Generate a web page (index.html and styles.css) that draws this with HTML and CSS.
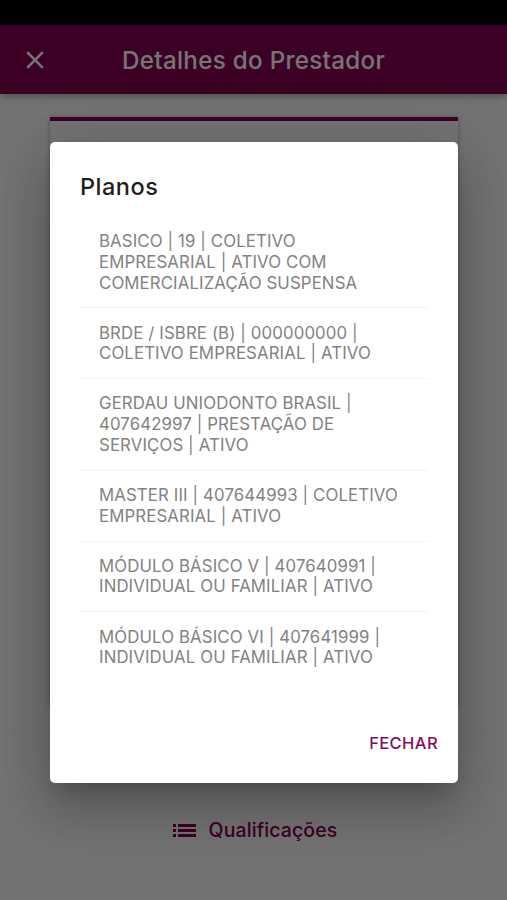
FILE: index.html
```html
<!DOCTYPE html>
<html lang="pt-BR">
<head>
    <meta charset="UTF-8">
    <meta name="viewport" content="width=device-width, initial-scale=1.0">
    <title>Detalhes do Prestador</title>
    <link rel="stylesheet" href="styles.css">
</head>
<body>
    <div class="status-bar"></div>

    <div class="page">
        <header class="header">
            <svg class="close-icon" viewBox="0 0 18 18"><path d="M1.2 1.2L16.8 16.8M16.8 1.2L1.2 16.8"/></svg>
            <h1>Detalhes do Prestador</h1>
        </header>

        <main class="content">
            <div class="card"></div>
        </main>

        <footer class="footer">
            <svg class="list-icon" viewBox="0 0 23 13"><path d="M0 0h3v3H0zM5 0h18v3H5zM0 5h3v3H0zM5 5h18v3H5zM0 10h3v3H0zM5 10h18v3H5z"/></svg>
            <span class="footer-label">Qualificações</span>
        </footer>

        <div class="overlay">
            <div class="modal">
                <h2>Planos</h2>
                <ul class="plans">
                    <li>BASICO | 19 | COLETIVO<br>EMPRESARIAL | ATIVO COM<br>COMERCIALIZAÇÃO SUSPENSA</li>
                    <li>BRDE / ISBRE (B) | 000000000 |<br>COLETIVO EMPRESARIAL | ATIVO</li>
                    <li>GERDAU UNIODONTO BRASIL |<br>407642997 | PRESTAÇÃO DE<br>SERVIÇOS | ATIVO</li>
                    <li>MASTER III | 407644993 | COLETIVO<br>EMPRESARIAL | ATIVO</li>
                    <li>MÓDULO BÁSICO V | 407640991 |<br>INDIVIDUAL OU FAMILIAR | ATIVO</li>
                    <li>MÓDULO BÁSICO VI | 407641999 |<br>INDIVIDUAL OU FAMILIAR | ATIVO</li>
                </ul>
                <button class="close-btn">FECHAR</button>
            </div>
        </div>
    </div>
</body>
</html>
```

FILE: styles.css
```css
* {
    box-sizing: border-box;
}
body {
    margin: 0;
    height: 900px;
    display: flex;
    flex-direction: column;
    overflow: hidden;
    font-family: Inter, "Liberation Sans", sans-serif;
}
.status-bar {
    height: 25px;
    background: #000;
}
.page {
    position: relative;
    flex: 1;
    display: flex;
    flex-direction: column;
    background: #fafafa;
}
.header {
    height: 69px;
    display: flex;
    align-items: center;
    padding: 0 26px;
    background: #840052;
    color: #fff;
    box-shadow: 0 2px 8px rgba(0,0,0,0.35);
}
.close-icon {
    width: 18px;
    height: 18px;
    fill: none;
    stroke: #fff;
    stroke-width: 2.5;
}
.header h1 {
    margin: 1px 0 0 78px;
    font-size: 24.2px;
    font-weight: 500;
    letter-spacing: 0.3px;
    white-space: nowrap;
}
.content {
    flex: 1;
    padding: 23px 49px 30px 50px;
}
.card {
    height: 100%;
    border-top: 4px solid #840052;
    box-shadow: 0 1px 5px rgba(0,0,0,0.3);
}
.footer {
    height: 165px;
    border-top: 1px solid #f3f3f3;
    display: flex;
    justify-content: center;
    padding: 82px 0 0 3px;
    color: #840052;
}
.list-icon {
    width: 23px;
    height: 13px;
    margin: 6px 13px 0 0;
    fill: #840052;
}
.footer-label {
    font-size: 19.5px;
    line-height: 24px;
    font-weight: 500;
    letter-spacing: 0.1px;
}
.overlay {
    position: absolute;
    inset: 0;
    display: flex;
    align-items: center;
    justify-content: center;
    padding-left: 1px;
    background: rgba(0,0,0,0.54);
}
.modal {
    width: 408px;
    height: 641px;
    padding: 30px 30px 20px;
    display: flex;
    flex-direction: column;
    background: #fff;
    border-radius: 5px;
    box-shadow: 0 14px 19px -9px rgba(0,0,0,0.2), 0 30px 48px 4px rgba(0,0,0,0.14), 0 11px 58px 10px rgba(0,0,0,0.12);
}
.modal h2 {
    margin: 0 0 15px;
    font-size: 23.5px;
    line-height: 30px;
    font-weight: 500;
    letter-spacing: 0.5px;
    color: #1e1e1e;
}
.plans {
    margin: 0;
    padding: 0;
    list-style: none;
}
.plans li {
    padding: 14.2px 0 14.2px 19px;
    border-bottom: 1px solid #f3f3f3;
    font-size: 16.8px;
    line-height: 20.7px;
    letter-spacing: 0.12px;
    color: #828282;
    white-space: nowrap;
}
.plans li:last-child {
    border-bottom: none;
}
.close-btn {
    margin: auto -10px 8px auto;
    padding: 0;
    border: none;
    background: none;
    font-family: inherit;
    font-size: 16.5px;
    line-height: 24px;
    font-weight: 500;
    letter-spacing: 0.4px;
    color: #840c60;
}
```
